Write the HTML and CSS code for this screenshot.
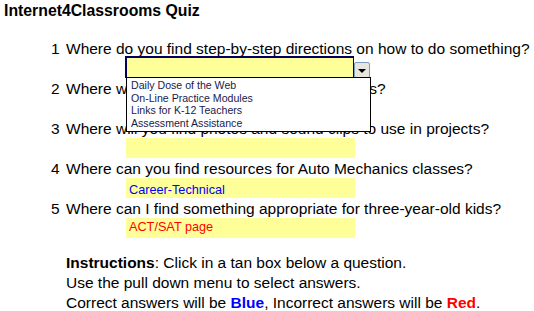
FILE: index.html
```html
<!DOCTYPE html>
<html>
<head>
 <meta charset="utf-8"/>
 <title>Internet4Classrooms Quiz</title>
 <link rel="stylesheet" href="styles.css">
</head>
<body>
<h1 class="title">Internet4Classrooms Quiz</h1>

<div class="quiz">
 <div class="q">
  <span class="num">1</span>
  <span class="text">Where do you find step-by-step directions on how to do something?</span>
  <div class="answer open">
   <span class="drop"><span class="arrow"></span></span>
   <ul class="list">
    <li>Daily Dose of the Web</li>
    <li>On-Line Practice Modules</li>
    <li>Links for K-12 Teachers</li>
    <li>Assessment Assistance</li>
   </ul>
  </div>
 </div>

 <div class="q">
  <span class="num">2</span>
  <span class="text">Where will you find On-Line practice modules?</span>
  <div class="answer"></div>
 </div>

 <div class="q">
  <span class="num">3</span>
  <span class="text">Where will you find photos and sound clips to use in projects?</span>
  <div class="answer"></div>
 </div>

 <div class="q">
  <span class="num">4</span>
  <span class="text">Where can you find resources for Auto Mechanics classes?</span>
  <div class="answer right">Career-Technical</div>
 </div>

 <div class="q">
  <span class="num">5</span>
  <span class="text">Where can I find something appropriate for three-year-old kids?</span>
  <div class="answer wrong">ACT/SAT page</div>
 </div>
</div>

<div class="instructions">
 <p><b>Instructions</b>: Click in a tan box below a question.</p>
 <p>Use the pull down menu to select answers.</p>
 <p>Correct answers will be <b class="blue">Blue</b>, Incorrect answers will be <b class="red">Red</b>.</p>
</div>
</body>
</html>
```

FILE: styles.css
```css
body {
 font-family: "Liberation Sans", Arial, sans-serif;
 color: #000;
 background: #fff;
 margin: 0;
 padding: 2px 5px 0 4px;
}
.title {
 font-size: 15.8px;
 font-weight: bold;
 line-height: 18px;
 margin: 0;
}
.quiz {
 margin-top: 20px;
 padding-left: 47px;
}
.q {
 display: grid;
 grid-template-columns: 15px auto;
 font-size: 15.5px;
 line-height: 18px;
 white-space: nowrap;
}
.num { grid-column: 1; }
.text { grid-column: 2; }
.answer {
 grid-column: 2;
 position: relative;
 box-sizing: border-box;
 margin-left: 60px;
 margin-bottom: 2px;
 width: 229px;
 height: 20px;
 background: #ffff99;
 font-size: 12.7px;
 line-height: 15px;
 padding: 5px 0 0 3px;
}
.answer.right { color: #0000ff; }
.answer.wrong {
 color: #ff0000;
 padding-top: 2px;
 line-height: 14px;
}
.answer.open {
 margin-left: 59px;
 margin-top: -2px;
 height: 22px;
 border: 2px solid #000060;
 border-right-width: 1px;
 border-bottom-width: 1px;
}
.drop {
 position: absolute;
 left: 227px;
 top: 4px;
 width: 16px;
 height: 16px;
 box-sizing: border-box;
 border: 1px solid #7f9db9;
 border-radius: 2px;
 background: #e6e6de;
 display: flex;
 align-items: center;
 justify-content: center;
}
.arrow {
 width: 0;
 height: 0;
 border-left: 4px solid transparent;
 border-right: 4px solid transparent;
 border-top: 4px solid #000;
 margin-top: 1px;
}
.list {
 position: absolute;
 left: -1px;
 top: 19px;
 width: 245px;
 height: 55px;
 box-sizing: border-box;
 margin: 0;
 padding: 1px 0 0 4px;
 list-style: none;
 background: #fff;
 border: 1px solid #000;
 font-size: 10.6px;
 line-height: 12.7px;
 color: #1a1a4a;
 z-index: 2;
}
.instructions {
 margin-top: 13px;
 padding-left: 62px;
 font-size: 15.5px;
 line-height: 20px;
}
.instructions p { margin: 0; }
.blue { color: #0000ff; }
.red { color: #ff0000; }
```
